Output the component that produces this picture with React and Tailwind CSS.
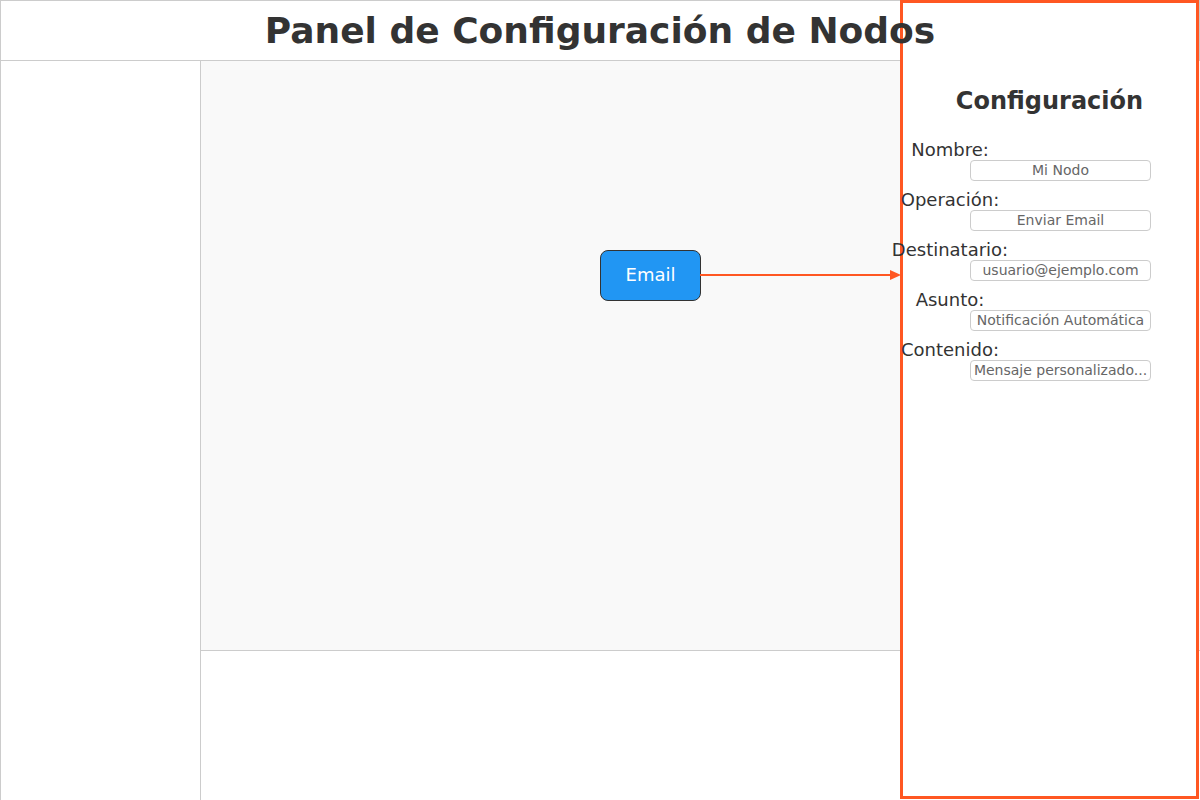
const FIELDS = [
  { label: 'Nombre:', value: 'Mi Nodo' },
  { label: 'Operación:', value: 'Enviar Email' },
  { label: 'Destinatario:', value: 'usuario@ejemplo.com' },
  { label: 'Asunto:', value: 'Notificación Automática' },
  { label: 'Contenido:', value: 'Mensaje personalizado...' },
];

export default function App() {
  return (
    <div className="relative h-[800px] w-[1200px] overflow-hidden bg-white text-[#333] flex flex-col" style={{ fontFamily: '"DejaVu Sans", sans-serif' }}>
      <header className="h-[61px] shrink-0 border border-[#ccc] flex items-center justify-center">
        <h1 className="relative z-10 text-[36px] font-bold leading-none">Panel de Configuración de Nodos</h1>
      </header>

      <div className="flex flex-1">
        <aside className="w-[201px] shrink-0 border-l border-r border-[#ccc]" />
        <main className="flex-1 flex flex-col">
          <div className="relative h-[590px] bg-[#f9f9f9] border-b border-[#ccc]">
            <div className="absolute left-[399px] top-[189px] w-[101px] h-[51px] pb-px rounded-lg border border-[#333] bg-[#2196f3] text-white text-[18px] leading-none flex items-center justify-center">
              Email
            </div>
          </div>
          <div className="flex-1" />
        </main>
      </div>

      {/* connection line to the panel */}
      <svg className="absolute left-[700px] top-[269px]" width="201" height="12" viewBox="0 0 201 12">
        <line x1="0" y1="6" x2="192" y2="6" stroke="#ff5722" strokeWidth="2" />
        <polygon points="190,1 201,6 190,11" fill="#ff5722" />
      </svg>

      <section className="absolute left-[900px] top-0 w-[299px] h-[799px] border-[3px] border-[#ff5722] bg-white">
        <h2 className="mt-[84px] h-[28px] text-center text-[24px] font-bold leading-[28px]">Configuración</h2>
        <div className="mt-[24px] flex flex-col">
          {FIELDS.map((f) => (
            <div key={f.label} className="flex flex-col mb-[8px]">
              <label className="w-[94px] h-[21px] flex justify-center text-[18px] leading-[21px]">
                <span className="whitespace-nowrap shrink-0">{f.label}</span>
              </label>
              <input
                readOnly
                value={f.value}
                className="ml-[67px] w-[181px] h-[21px] px-[2px] border border-[#ccc] rounded-[4px] text-center text-[14px] text-[#666] outline-none"
                style={{ fontFamily: '"DejaVu Sans", sans-serif' }}
              />
            </div>
          ))}
        </div>
      </section>
    </div>
  );
}
